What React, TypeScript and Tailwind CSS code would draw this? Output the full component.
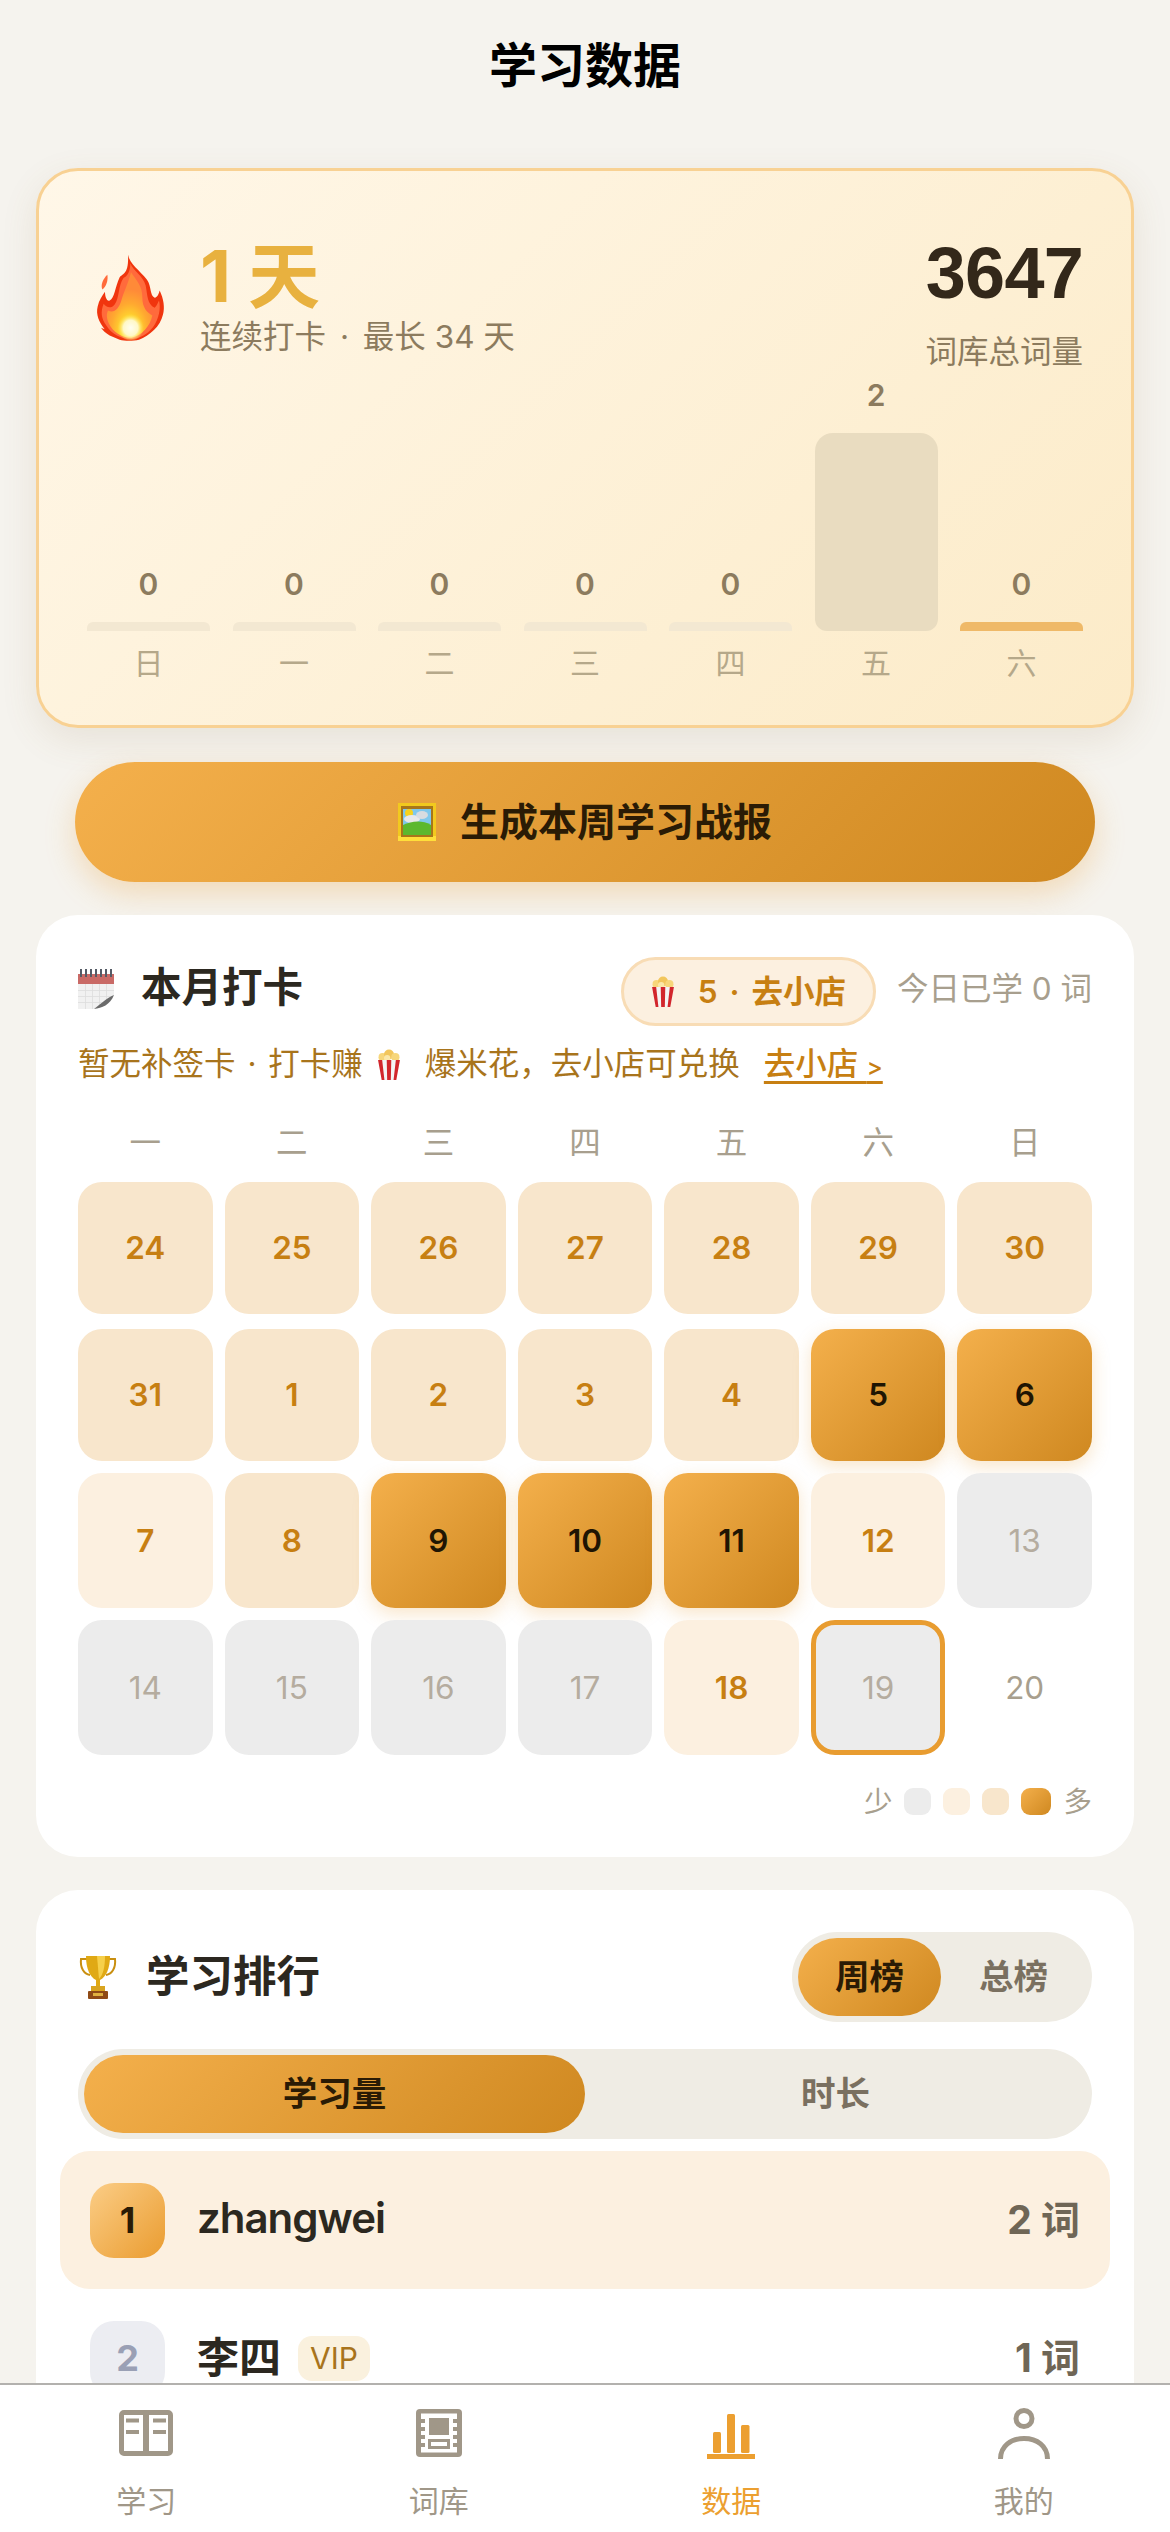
const cjk = "font-['Inter','Noto_Sans_CJK_SC',sans-serif]";
const gold = "bg-[linear-gradient(135deg,#f4b04c,#cf8820)]";

const weekBars = [
  { day: "日", value: 0 },
  { day: "一", value: 0 },
  { day: "二", value: 0 },
  { day: "三", value: 0 },
  { day: "四", value: 0 },
  { day: "五", value: 2 },
  { day: "六", value: 0, today: true },
];

type Level = 0 | 1 | 2 | 3 | "future" | "current";

const calendarDays: { d: number; level: Level }[] = [
  { d: 24, level: 2 }, { d: 25, level: 2 }, { d: 26, level: 2 }, { d: 27, level: 2 }, { d: 28, level: 2 }, { d: 29, level: 2 }, { d: 30, level: 2 },
  { d: 31, level: 2 }, { d: 1, level: 2 }, { d: 2, level: 2 }, { d: 3, level: 2 }, { d: 4, level: 2 }, { d: 5, level: 3 }, { d: 6, level: 3 },
  { d: 7, level: 1 }, { d: 8, level: 2 }, { d: 9, level: 3 }, { d: 10, level: 3 }, { d: 11, level: 3 }, { d: 12, level: 1 }, { d: 13, level: 0 },
  { d: 14, level: 0 }, { d: 15, level: 0 }, { d: 16, level: 0 }, { d: 17, level: 0 }, { d: 18, level: 1 }, { d: 19, level: "current" }, { d: 20, level: "future" },
];

function cellClass(level: Level) {
  if (level === 3) return `${gold} text-[#1f1503] font-semibold shadow-[0_6px_18px_rgba(232,156,48,0.25)]`;
  if (level === 2) return "bg-[#f8e6cc] text-[#c77f12] font-semibold";
  if (level === 1) return "bg-[#fcf0e0] text-[#c77f12] font-semibold";
  if (level === 0) return "bg-[#ececec] text-[#b5ac9f]";
  if (level === "current") return "bg-[#ececec] text-[#b5ac9f] border-[5px] border-[#e89c30]";
  return "text-[#a89f8e]";
}

function Flame() {
  return (
    <svg viewBox="100 95 225 275" className="h-[92px] w-[75px] shrink-0">
      <defs>
        <radialGradient id="fl" cx="50%" cy="88%" r="62%">
          <stop offset="0" stopColor="#fff7a0" />
          <stop offset="0.3" stopColor="#ffd82e" />
          <stop offset="0.65" stopColor="#ffa930" />
          <stop offset="1" stopColor="#ff8a38" />
        </radialGradient>
        <radialGradient id="fc" cx="50%" cy="55%" r="50%">
          <stop offset="0" stopColor="#fffef0" />
          <stop offset="0.55" stopColor="#fff8c8" />
          <stop offset="1" stopColor="#ffe24a" stopOpacity="0" />
        </radialGradient>
      </defs>
      <path d="M205 103C210 130 240 150 262 178C276 198 270 225 285 232C294 230 298 218 300 210C312 235 316 262 310 282C302 318 270 345 238 358C220 362 195 362 180 358L150 345C137 338 130 330 124 322L135 326C118 305 108 282 114 258C118 240 128 225 136 214C136 230 142 244 150 240C165 232 166 200 180 170C190 160 208 160 205 103Z" fill="#f0350e" />
      <path d="M143 163C146 178 140 200 128 207C122 195 130 175 143 163Z" fill="#ff6a3a" />
      <path d="M212 128C220 150 250 165 258 195C264 225 262 250 285 262C292 256 295 245 298 240C304 262 298 295 280 320C262 342 240 354 215 356C185 356 155 340 140 315C125 295 122 275 132 250C140 262 155 265 165 252C180 232 175 195 192 172C205 165 212 150 212 128Z" fill="#ff6a3c" />
      <path d="M214 155C230 180 248 195 248 230C248 262 262 275 278 285C272 315 248 345 215 352C185 352 160 335 148 310C140 292 140 280 145 270C162 280 178 265 185 240C192 215 205 190 214 155Z" fill="url(#fl)" />
      <ellipse cx="213" cy="318" rx="40" ry="42" fill="url(#fc)" />
    </svg>
  );
}

function PictureFrame() {
  return (
    <svg viewBox="0 0 38 38" className="h-[38px] w-[38px] shrink-0">
      <rect x="0" y="0" width="38" height="38" fill="#f2c91e" />
      <rect x="0" y="33" width="38" height="5" fill="#ffdf3a" />
      <rect x="3" y="3" width="32" height="31" fill="#a8761a" />
      <rect x="5" y="6" width="28" height="26" fill="#7fc8ec" />
      <circle cx="11" cy="10" r="4" fill="#f7d31e" />
      <ellipse cx="14" cy="16" rx="8" ry="4" fill="#e8e8e8" />
      <ellipse cx="24" cy="12" rx="6" ry="4" fill="#d8dce0" />
      <path d="M5 22C14 18 24 17 33 22V32H5Z" fill="#5cb82e" />
    </svg>
  );
}

function CalendarEmoji() {
  return (
    <svg viewBox="0 0 36 40" className="h-[40px] w-[36px] shrink-0">
      <rect x="0" y="5" width="36" height="35" fill="#f1f1f1" />
      <rect x="0" y="5" width="36" height="10" fill="#c96a66" />
      {[3, 8, 13, 18, 23, 28, 33].map((x) => (
        <rect key={x} x={x - 1} y="0" width="2" height="8" fill="#555b66" />
      ))}
      {[21, 27, 33].map((y) => (
        <rect key={y} x="0" y={y} width="36" height="0.8" fill="#dedede" />
      ))}
      {[7, 14, 21, 28].map((x) => (
        <rect key={x} x={x} y="15" width="0.8" height="25" fill="#dedede" />
      ))}
      <path d="M36 26C32 32 26 34 16 40H36Z" fill="#fff" />
      <path d="M36 26C30 28 24 34 16 40C24 39 32 36 36 26Z" fill="#6b6b6b" />
    </svg>
  );
}

function Popcorn({ className }: { className: string }) {
  return (
    <svg viewBox="0 0 26 34" className={className}>
      <circle cx="6" cy="9" r="4.5" fill="#f7d67a" />
      <circle cx="13" cy="6" r="5.5" fill="#f2c65c" />
      <circle cx="20" cy="9" r="4.5" fill="#f7d67a" />
      <circle cx="11" cy="10" r="3.5" fill="#fbe7a8" />
      <path d="M1 12H25L21 34H5Z" fill="#f4f4f4" />
      <path d="M1 12H5.5L8 34H5ZM10.5 12H15.5L15 34H11ZM20.5 12H25L21 34H18Z" fill="#d2262c" />
    </svg>
  );
}

function Trophy() {
  return (
    <svg viewBox="0 0 40 44" className="h-[44px] w-[40px] shrink-0">
      <path d="M9 4H3C2 13 6 19 12 20M31 4H37C38 13 34 19 28 20" fill="none" stroke="#c98f10" strokeWidth="2" />
      <path d="M8 1H32C32 14 28 22 22 25V32H18V25C12 22 8 14 8 1Z" fill="#e0a914" />
      <path d="M19 1H27C27 12 25 20 21 24Z" fill="#f6d04a" />
      <rect x="13" y="31" width="14" height="5" fill="#d9a520" />
      <rect x="10" y="36" width="20" height="8" rx="1" fill="#8f4a16" />
      <rect x="15" y="38" width="10" height="3" fill="#e0b040" />
    </svg>
  );
}

function BookIcon() {
  return (
    <svg viewBox="0 0 54 46" className="h-[46px] w-[54px]" fill="none">
      <rect x="2.5" y="2.5" width="49" height="41" rx="2.5" stroke="#a09788" strokeWidth="5" />
      <path d="M27 2V44" stroke="#a09788" strokeWidth="6" />
      <path d="M7 10.5H20M34 10.5H47M7 22H20M34 22H47" stroke="#a09788" strokeWidth="4" />
    </svg>
  );
}

function FilmIcon() {
  return (
    <svg viewBox="0 0 46 48" className="h-[48px] w-[46px]">
      <rect x="0" y="0" width="46" height="48" rx="4" fill="#a09788" />
      <rect x="5" y="4.5" width="36" height="39" fill="#fff" />
      <rect x="13" y="9" width="20" height="17" fill="#a09788" />
      <rect x="13.5" y="31.5" width="19" height="7" fill="none" stroke="#a09788" strokeWidth="3" />
      {[10, 18, 26, 34].map((y) => (
        <g key={y}>
          <rect x="5" y={y} width="4" height="4" fill="#a09788" />
          <rect x="37" y={y} width="4" height="4" fill="#a09788" />
        </g>
      ))}
    </svg>
  );
}

function ChartIcon() {
  return (
    <svg viewBox="0 0 48 45" className="h-[45px] w-[48px] translate-y-[3px]" fill="#ec9f30">
      <rect x="6" y="18" width="8" height="21" rx="1.5" />
      <rect x="20" y="0" width="8" height="39" rx="1.5" />
      <rect x="34" y="11" width="8.5" height="28" rx="1.5" />
      <rect x="0" y="40" width="48" height="5" />
    </svg>
  );
}

function PersonIcon() {
  return (
    <svg viewBox="0 0 52 51" className="h-[51px] w-[52px]" fill="none" stroke="#a09788" strokeWidth="5">
      <circle cx="26" cy="10.5" r="8" />
      <path d="M2.5 51C2.5 38 13 30.5 26 30.5S49.5 38 49.5 51" />
    </svg>
  );
}

const navItems = [
  { label: "学习", icon: <BookIcon /> },
  { label: "词库", icon: <FilmIcon /> },
  { label: "数据", icon: <ChartIcon />, active: true },
  { label: "我的", icon: <PersonIcon /> },
];

export default function App() {
  return (
    <div className={`flex h-[2532px] w-[1170px] flex-col overflow-hidden bg-[#f5f3ee] ${cjk}`}>
      <main className="min-h-0 flex-1 overflow-hidden">
        {/* Page title */}
        <div className="flex h-[132px] items-center justify-center text-[48px] font-bold text-black">学习数据</div>

        <div className="mt-[36px] px-[36px]">
          {/* Streak hero */}
          <section className="h-[560px] rounded-[42px] border-[3px] border-[#f8d193] bg-[linear-gradient(135deg,#fff7e8,#fcebc8)] px-[48px] pt-[60px] shadow-[0_12px_36px_rgba(140,110,60,0.12)]">
            <div className="flex items-start justify-between">
              <div className="flex items-start gap-[32px] pl-[6px]">
                <div className="mt-[21px]"><Flame /></div>
                <div className="pt-[3px]">
                  <div className="text-[72px] leading-[84px] font-bold text-[#e8b13f]">1 天</div>
                  <div className="text-[31.5px] leading-[38px] text-[#8c7b5e]">
                    连续打卡 <span className="px-[5px]">·</span> 最长 34 天
                  </div>
                </div>
              </div>
              <div className="text-right">
                <div className="font-['Liberation_Sans'] text-[72px] leading-[84px] font-bold tracking-[-0.75px] text-[#33281a]">3647</div>
                <div className="mt-[16px] text-[31.5px] leading-[42px] text-[#8c7b5e]">词库总词量</div>
              </div>
            </div>
            <div className="mt-[4px] grid grid-cols-7 items-end gap-[22.5px]">
              {weekBars.map((b) => (
                <div key={b.day} className="flex flex-col items-center">
                  <span className="text-[30px] leading-[36px] font-semibold text-[#8c7b5e]">{b.value}</span>
                  {b.value > 0 ? (
                    <div className="mt-[20px] h-[198px] w-full rounded-t-[18px] rounded-b-[12px] bg-[#e9dcc0]" />
                  ) : (
                    <div className={`mt-[20px] h-[9px] w-full rounded-t-[6px] ${b.today ? "bg-[#efb968]" : "bg-[#f3e8d2]"}`} />
                  )}
                  <span className="mt-[14px] text-[30px] leading-[36px] text-[#b5a88a]">{b.day}</span>
                </div>
              ))}
            </div>
          </section>

          {/* Weekly report button */}
          <div className="mt-[34px] px-[39px]">
            <button type="button" className={`flex h-[120px] w-full items-center justify-center gap-[24px] rounded-full ${gold} text-[39px] font-bold text-[#2a1b05] shadow-[0_12px_30px_rgba(232,156,48,0.28)]`}>
              <PictureFrame />
              生成本周学习战报
            </button>
          </div>

          {/* Monthly check-in */}
          <section className="mt-[33px] rounded-[42px] bg-white px-[42px] pt-[42px] pb-[37.5px]">
            <div className="flex items-center justify-between">
              <div className="-mt-[6px] flex items-center gap-[27px]">
                <CalendarEmoji />
                <span className="text-[40.5px] font-bold text-[#2c2820]">本月打卡</span>
              </div>
              <div className="flex items-center gap-[21px]">
                <div className="flex h-[69px] items-center gap-[23px] rounded-full border-[3px] border-[#f8dcb5] bg-[#fcf0e0] px-[27px] text-[31.5px] font-semibold text-[#c77f12]">
                  <Popcorn className="h-[31px] w-[24px]" />
                  <span>5 <span className="px-[4px]">·</span> 去小店</span>
                </div>
                <span className="-mt-[6px] text-[31.5px] text-[#a89f8e]">今日已学 0 词</span>
              </div>
            </div>
            <div className="mt-[14px] flex h-[48px] items-center text-[31.5px] leading-[48px] text-[#a8741c]">
              <span>暂无补签卡 <span className="px-[3px]">·</span> 打卡赚</span>
              <Popcorn className="mr-[24px] ml-[14px] h-[31px] w-[24px]" />
              爆米花，去小店可兑换
              <span className="ml-[24px] font-medium text-[#c77f12] underline decoration-[3px] underline-offset-[6px]">
                去小店 <span className="text-[24px] leading-none">&gt;</span>
              </span>
            </div>
            <div className="mt-[31px] grid grid-cols-7 gap-[12px] text-center text-[31.5px] leading-[48px] text-[#a89f8e]">
              {["一", "二", "三", "四", "五", "六", "日"].map((w) => (
                <div key={w}>{w}</div>
              ))}
            </div>
            <div className="mt-[15px] grid grid-cols-7 grid-rows-[135px_132px_135px_135px] gap-[12px]">
              {calendarDays.map((c, i) => (
                <div key={c.d} className={`flex items-center justify-center rounded-[24px] text-[31.5px] ${i < 7 ? "h-[132px]" : "h-full"} ${cellClass(c.level)}`}>
                  {c.d}
                </div>
              ))}
            </div>
            <div className="mt-[28.5px] flex items-center justify-end gap-[12px] text-[28.5px] leading-[36px] text-[#a89f8e]">
              <span>少</span>
              <div className="h-[27px] w-[27px] rounded-[9px] bg-[#ececec]" />
              <div className="h-[27px] w-[27px] rounded-[9px] bg-[#fcf0e0]" />
              <div className="h-[27px] w-[27px] rounded-[9px] bg-[#f8e6cc]" />
              <div className={`h-[27px] w-[30px] rounded-[9px] ${gold}`} />
              <span>多</span>
            </div>
          </section>

          {/* Leaderboard */}
          <section className="mt-[33px] rounded-[42px] bg-white px-[24px] pt-[42px]">
            <div className="flex items-center justify-between px-[18px]">
              <div className="flex items-center gap-[28px]">
                <Trophy />
                <span className="text-[43.5px] font-bold text-[#2c2820]">学习排行</span>
              </div>
              <div className="flex h-[90px] w-[300px] rounded-full bg-[#efece4] p-[6px] text-[34.5px] font-bold">
                <div className={`flex w-[143px] items-center justify-center rounded-full ${gold} text-[#2a1b05]`}>周榜</div>
                <div className="flex flex-1 items-center justify-center text-[#7a7060]">总榜</div>
              </div>
            </div>
            <div className="mx-[18px] mt-[27px] flex h-[90px] rounded-full bg-[#efece4] p-[6px] text-[34.5px] font-bold">
              <div className={`flex flex-1 items-center justify-center rounded-full ${gold} text-[#2a1b05]`}>学习量</div>
              <div className="flex flex-1 items-center justify-center text-[#7a7060]">时长</div>
            </div>
            <div className="mt-[12px] flex h-[138px] items-center justify-between rounded-[30px] bg-[#fcf0e0] px-[30px]">
              <div className="flex items-center gap-[32px]">
                <div className="flex h-[75px] w-[75px] items-center justify-center rounded-[24px] bg-[linear-gradient(135deg,#fbcd86,#ea9c30)] text-[36px] font-bold text-[#2a1b05]">1</div>
                <span className="-mt-[4px] text-[42px] leading-[42px] font-semibold tracking-[-1px] text-[#2c2820]">zhangwei</span>
              </div>
              <span className="text-[39px] leading-[42px] font-bold text-[#6f6656]">2 词</span>
            </div>
            <div className="flex h-[138px] items-center justify-between px-[30px]">
              <div className="flex items-center gap-[32px]">
                <div className="flex h-[75px] w-[75px] items-center justify-center rounded-[24px] bg-[#ecedf2] text-[36px] font-bold text-[#9aa0b5]">2</div>
                <span className="text-[42px] leading-[42px] font-bold text-[#2c2820]">李四</span>
                <span className="-ml-[15px] flex h-[45px] w-[72px] items-center justify-center rounded-[14px] bg-[#faf1de] text-[30px] text-[#a8741c]">VIP</span>
              </div>
              <span className="text-[39px] leading-[42px] font-bold text-[#6f6656]">1 词</span>
            </div>
          </section>
        </div>
      </main>

      {/* Tab bar */}
      <nav className="grid h-[149px] shrink-0 grid-cols-4 border-t-[2px] border-[#b3b1ae] bg-white">
        {navItems.map((n) => (
          <div key={n.label} className="flex flex-col items-center pt-[22px]">
            <div className="flex h-[52px] items-center">{n.icon}</div>
            <span className={`mt-[23.5px] text-[30px] leading-[36px] ${n.active ? "text-[#ec9f30]" : "text-[#a09788]"}`}>{n.label}</span>
          </div>
        ))}
      </nav>
    </div>
  );
}
